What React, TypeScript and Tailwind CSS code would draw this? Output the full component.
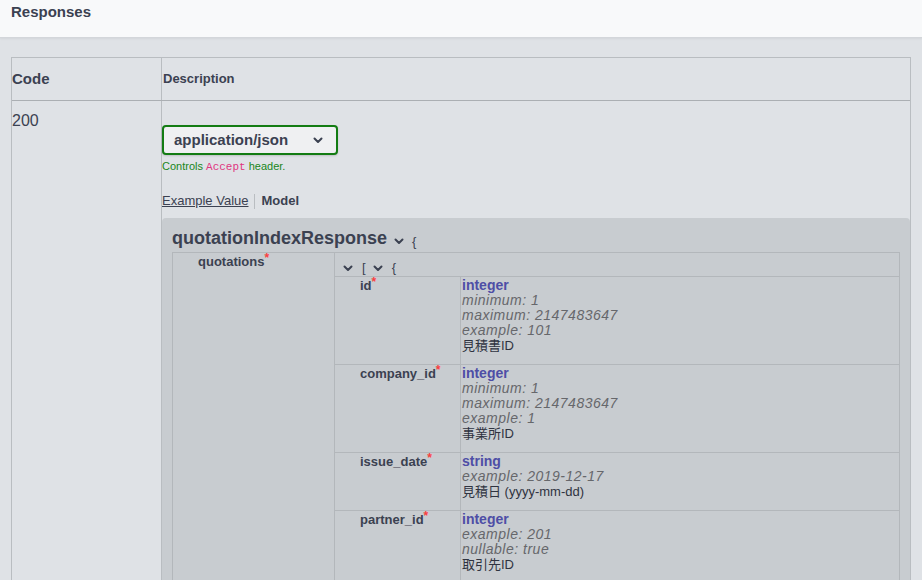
import React from "react";

const Chevron = ({ className = "" }: { className?: string }) => (
  <svg viewBox="0 0 12 12" className={className} fill="none" stroke="currentColor" strokeWidth="2" strokeLinecap="round" strokeLinejoin="round">
    <path d="M2.5 4.5 L6 8 L9.5 4.5" />
  </svg>
);

type Prop = { name: string; type: string; meta: string[]; desc: string };

const props: Prop[] = [
  { name: "id", type: "integer", meta: ["minimum: 1", "maximum: 2147483647", "example: 101"], desc: "見積書ID" },
  { name: "company_id", type: "integer", meta: ["minimum: 1", "maximum: 2147483647", "example: 1"], desc: "事業所ID" },
  { name: "issue_date", type: "string", meta: ["example: 2019-12-17"], desc: "見積日 (yyyy-mm-dd)" },
  { name: "partner_id", type: "integer", meta: ["example: 201", "nullable: true"], desc: "取引先ID" },
];

const Star = () => <span className="text-[#f93e3e] text-[12px] font-bold relative top-[-4px] leading-[0]">*</span>;

export default function App() {
  return (
    <div
      className="w-[922px] h-[580px] overflow-hidden bg-[#dfe2e6] text-[#3b4151]"
      style={{ fontFamily: '"Liberation Sans", "Noto Sans CJK JP", sans-serif' }}
    >
      <div className="h-[38px] bg-[#f8f9fa] border-b border-[#d3d6da] shadow-[0_1px_2px_rgba(0,0,0,0.06)] px-[11px] pt-[3px]">
        <h4 className="text-[15px] leading-[18px] font-bold text-[#3b4151]">Responses</h4>
      </div>

      <div className="pl-[11px] pr-[11px] pt-[19px]">
        <div className="border-l border-t border-r border-[#b9bdc1]">
          {/* header row */}
          <div className="grid grid-cols-[150px_1fr] h-[43px] border-b border-[#abafb3]">
            <div className="flex items-center border-r border-[#b9bdc1] text-[15px] font-bold">Code</div>
            <div className="flex items-center pl-[1px] text-[13px] font-bold">Description</div>
          </div>
          {/* body row */}
          <div className="grid grid-cols-[150px_1fr] h-[480px]">
            <div className="border-r border-[#b9bdc1] pt-[10px] text-[16px] leading-[19px]">200</div>
            <div className="pt-[24px]">
              <div className="w-[176px] h-[30px] rounded-[4px] border-2 border-[#137c13] bg-[#eff0f2] shadow-[0_1px_2px_rgba(0,0,0,0.15)] flex items-center pl-[10px] pr-[12px] justify-between">
                <span className="text-[15px] font-bold text-[#3b4151]">application/json</span>
                <Chevron className="w-[12px] h-[12px] text-[#3b4151]" />
              </div>
              <div className="mt-[4px] text-[11px] leading-[14px] text-[#1a861a]">
                Controls{" "}
                <span className="text-[#e0357f]" style={{ fontFamily: '"Liberation Mono", monospace' }}>Accept</span>{" "}
                header.
              </div>
              <div className="mt-[19px] flex items-center text-[13px] leading-[16px]">
                <span className="underline">Example Value</span>
                <span className="mx-[6px] w-px h-[15px] bg-[#b9bdc1]"></span>
                <span className="font-bold">Model</span>
              </div>
              <div className="mt-[9px] bg-[#c8ccd0] rounded-t-[4px] pl-[10px] pr-[10px] pt-[10px] h-[400px]">
                <div className="h-[24px] flex items-start">
                  <span className="text-[18px] leading-[20px] font-bold text-[#3b4151]">quotationIndexResponse</span>
                  <Chevron className="ml-[6px] mt-[7px] w-[12px] h-[12px] text-[#3b4151]" />
                  <span className="ml-[7px] mt-[6px] text-[13px] leading-[16px]">{"{"}</span>
                </div>
                <div className="grid grid-cols-[162px_1fr] border-t border-l border-r border-[#b3b7bb] h-[360px]">
                  <div className="border-r border-[#b3b7bb] pl-[25px] pt-[1px] text-[13px] leading-[15px] font-bold">
                    quotations<Star />
                  </div>
                  <div>
                    <div className="h-[23px] flex items-end pb-[1px] pl-[7px] text-[13px] leading-[15px]">
                      <Chevron className="w-[12px] h-[12px] mb-[1px]" />
                      <span className="ml-[8px]">[</span>
                      <Chevron className="ml-[6px] w-[12px] h-[12px] mb-[1px]" />
                      <span className="ml-[8px]">{"{"}</span>
                    </div>
                    <div className="mr-[-1px]">
                      {props.map((p) => (
                        <div key={p.name} className="grid grid-cols-[125px_1fr] border-t border-[#b3b7bb]">
                          <div className="pl-[25px] pt-[1px] pb-[11px] text-[13px] leading-[15px] font-bold">
                            {p.name}
                            <Star />
                          </div>
                          <div className="border-l border-[#b3b7bb] pl-[1px] pt-[1px] pb-[11px] text-[13px] leading-[15px]">
                            <div className="font-bold text-[#4e4ea6] text-[14px]">{p.type}</div>
                            {p.meta.map((m) => (
                              <div key={m} className="italic text-[#66676b] text-[14px] tracking-[0.5px]">{m}</div>
                            ))}
                            <div className="text-[#2f3340]">{p.desc}</div>
                          </div>
                        </div>
                      ))}
                    </div>
                  </div>
                </div>
              </div>
            </div>
          </div>
        </div>
      </div>
    </div>
  );
}
